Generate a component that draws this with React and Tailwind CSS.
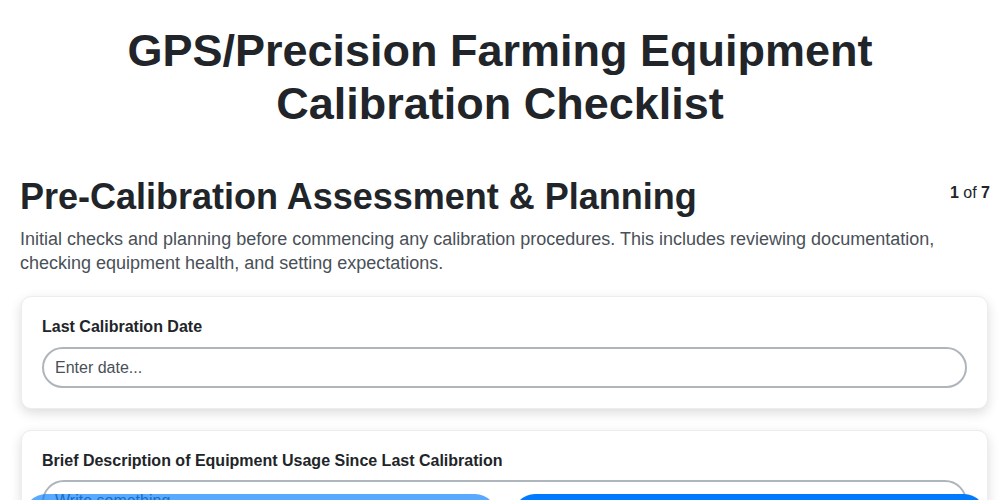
export default function App() {
  return (
    <div className="min-h-screen bg-white text-[#212529] font-['Liberation_Sans',Arial,sans-serif]">
      <div className="px-5 pt-[24px]">
        <h1 className="text-center text-[45px] font-bold leading-[53px] px-16">
          GPS/Precision Farming Equipment Calibration Checklist
        </h1>

        <div className="mt-[45px] -mr-[10px] flex items-start justify-between">
          <h2 className="text-[36px] font-bold leading-[44px]">Pre-Calibration Assessment &amp; Planning</h2>
          <div className="text-base pt-[6px]">
            <span className="font-bold">1</span> of <span className="font-bold">7</span>
          </div>
        </div>
        <p className="mt-[8px] text-[18px] leading-[24px] text-[#495057] pr-10">
          Initial checks and planning before commencing any calibration procedures. This includes reviewing documentation, checking equipment health, and setting expectations.
        </p>

        <div className="mt-[21px] flex flex-col gap-[21px] pb-24">
          <div className="ml-px -mr-[8px] rounded-[10px] bg-white px-5 pt-[20px] pb-[20px] border border-[#ececf1] shadow-[0_4px_12px_rgba(0,0,0,0.14)]">
            <label className="block text-base font-bold leading-5">Last Calibration Date</label>
            <input
              type="text"
              placeholder="Enter date..."
              className="mt-[10px] w-full h-[41px] rounded-full border-2 border-[#adb5bd] px-[11px] text-base text-[#495057] placeholder:text-[#495057] outline-none"
            />
          </div>
          <div className="ml-px -mr-[8px] rounded-[10px] bg-white px-5 pt-[20px] pb-[20px] border border-[#ececf1] shadow-[0_4px_12px_rgba(0,0,0,0.14)]">
            <label className="block text-base font-bold leading-5">Brief Description of Equipment Usage Since Last Calibration</label>
            <textarea
              placeholder="Write something..."
              className="mt-[9px] block w-full h-[100px] rounded-[22px] border-2 border-[#adb5bd] px-[11px] pt-[7px] text-base text-[#495057] placeholder:text-[#495057] outline-none resize-none"
            />
          </div>
        </div>
      </div>

      <div className="fixed left-0 right-0 top-[494px] flex gap-4 pl-6 pr-[14px]">
        <button className="flex-1 h-[44px] rounded-full bg-[#007bff] opacity-65 text-white text-base font-bold">
          Previous
        </button>
        <button className="flex-1 h-[44px] rounded-full bg-[#007bff] text-white text-base font-bold">
          Next
        </button>
      </div>
    </div>
  )
}
